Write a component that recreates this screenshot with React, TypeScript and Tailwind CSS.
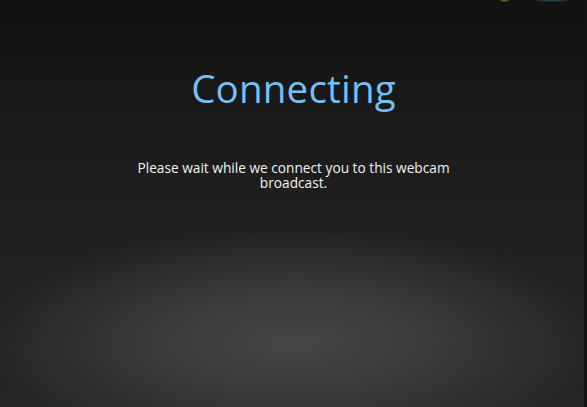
import React from 'react';

const App: React.FC = () => {
  return (
    <div className="relative w-[587px] h-[407px] overflow-hidden bg-[linear-gradient(to_bottom,#121212_0%,#1e1e1e_45%,#262626_100%)] font-['Open_Sans',sans-serif]">
      {/* radial glow */}
      <div className="absolute inset-0 bg-[radial-gradient(ellipse_310px_115px_at_50%_84%,#474747_0%,#3a3a3a_45%,rgba(40,40,40,0)_100%)]" />

      {/* logo peeking at the top */}
      <div className="absolute top-[-4px] left-[499px] w-[11px] h-[6px] rounded-full bg-[radial-gradient(ellipse,#c9963c_0%,rgba(201,150,60,0)_80%)]" />
      <div className="absolute top-[-4px] left-[530px] w-[44px] h-[6px] rounded-full bg-[radial-gradient(ellipse,#2a6f7d_0%,rgba(42,111,125,0)_80%)]" />

      {/* right edge */}
      <div className="absolute top-0 right-0 w-[3px] h-full bg-[#151515]" />

      <div className="relative flex flex-col items-center">
        <h1 className="mt-[63px] text-[38.5px] leading-[50px] text-[#74bff6] tracking-[0.2px]">
          Connecting
        </h1>
        <p className="mt-[47px] w-[324px] text-center text-[13.7px] leading-[15px] text-[#f2f2f2]">
          Please wait while we connect you to this webcam broadcast.
        </p>
      </div>
    </div>
  );
};

export default App;
